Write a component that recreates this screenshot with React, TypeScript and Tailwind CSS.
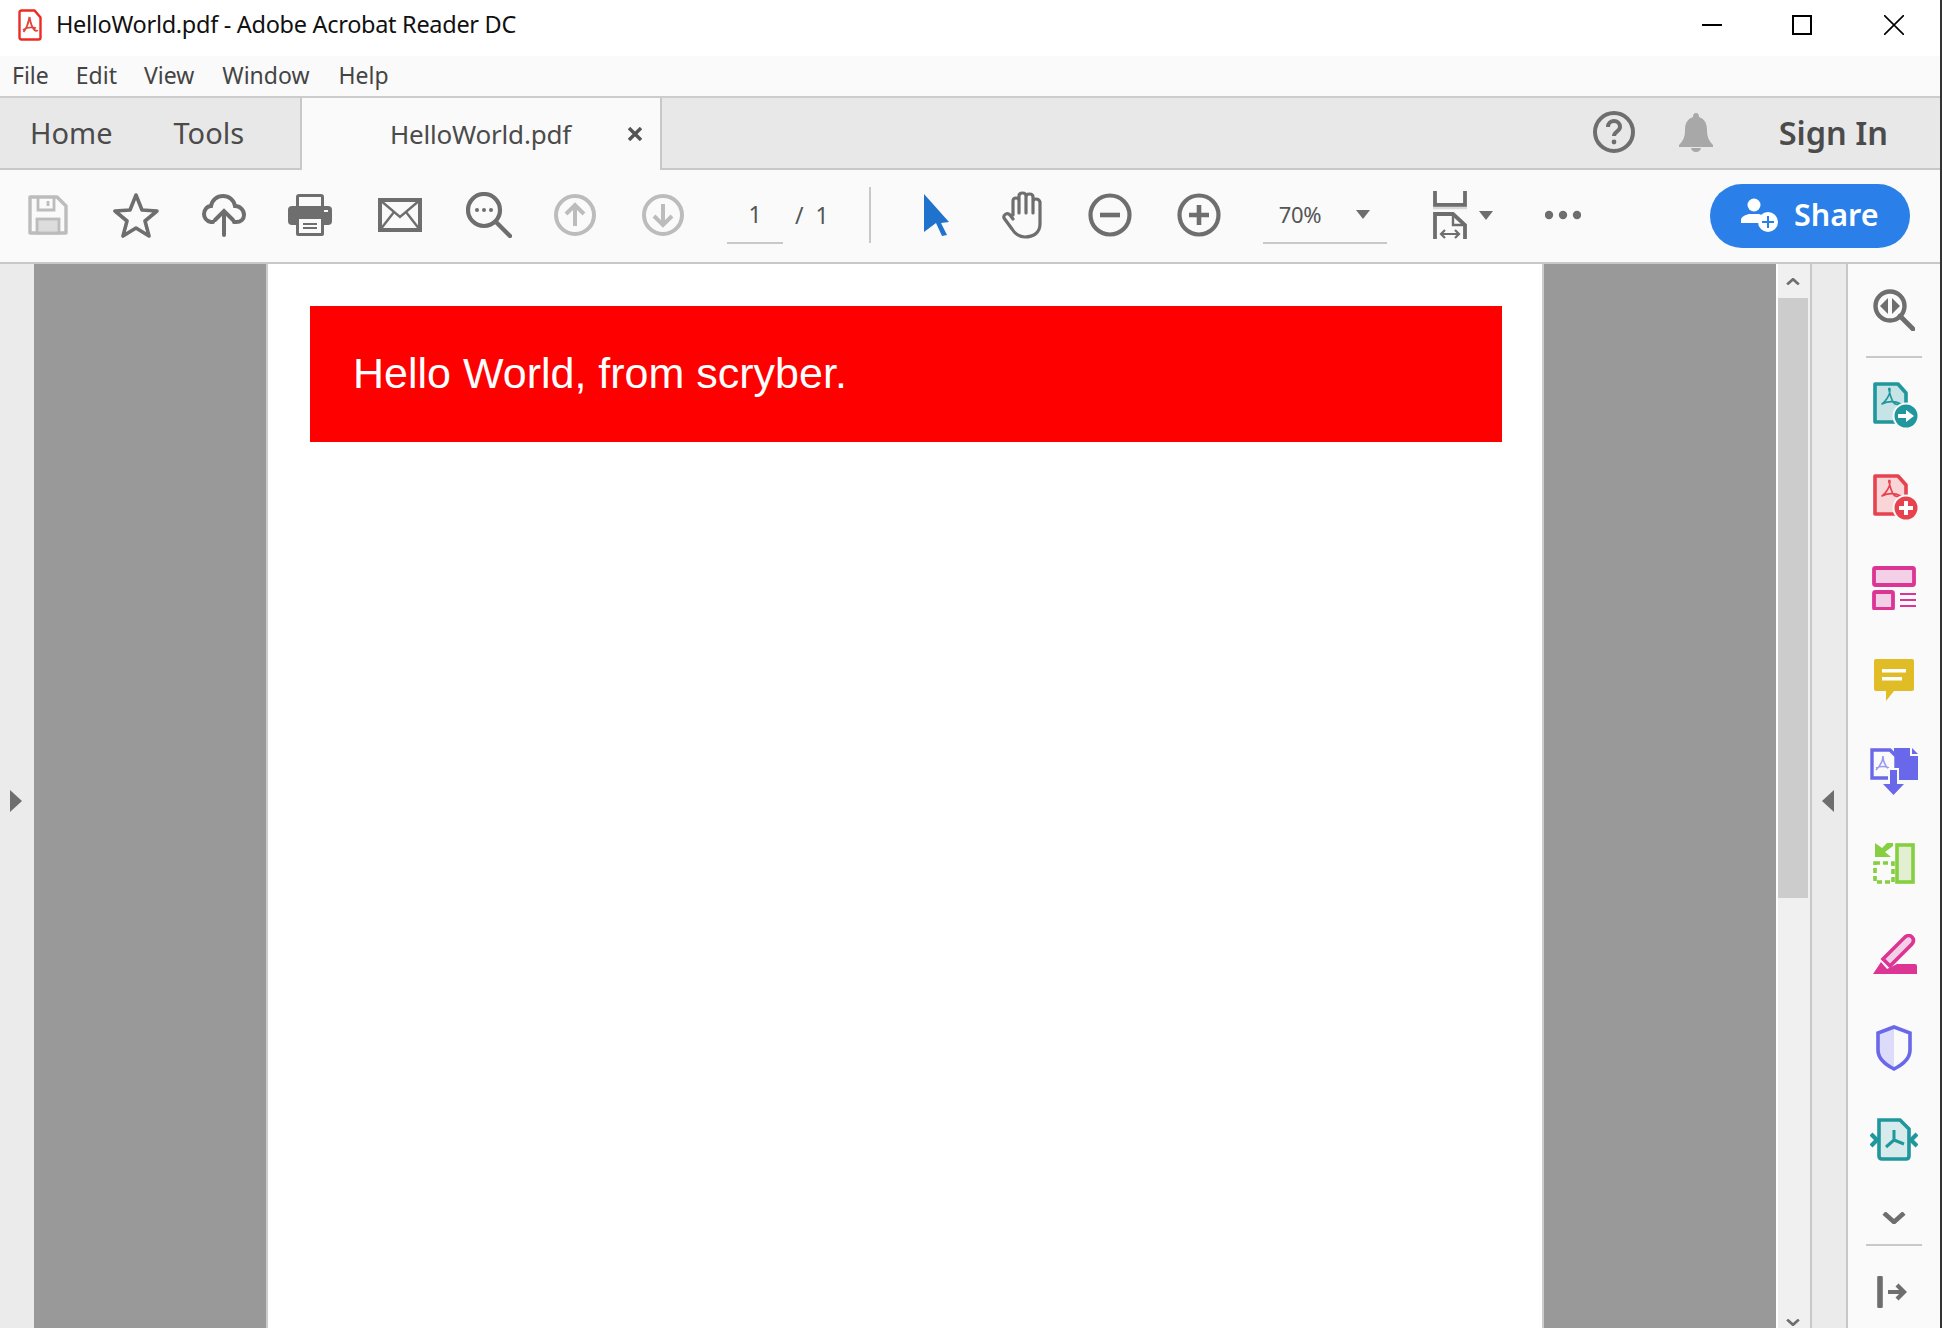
import React from "react";

const gray = "#6e6e6e";
const light = "#bcbcbc";

const Acro = ({ color, sw = 1.6 }: { color: string; sw?: number }) => (
  <path
    d="M16 8c1 5 3 10 4 12 2 3 6 3 8 2M16 8c-1-1 1-3 1 0 0 5-4 11-8 14M9 22c6-3 13-3 19 0"
    fill="none"
    stroke={color}
    strokeWidth={sw}
    strokeLinecap="round"
  />
);

// red pdf glyph next to the window title
const TitlePdf = () => (
  <svg width="26" height="34" viewBox="0 0 26 34" className="ml-[17px] shrink-0" fill="none">
    <path d="M2.5 4.5q0-2 2-2h13l6 7v20q0 2-2 2h-17q-2 0-2-2z" stroke="#ee2a24" strokeWidth="2.4" />
    <path d="M12.5 9c1 6 3 11 5 13 1 1 3 1 3 0M12.5 9c-1 2 0 7-6 15M6 22c4-3 9-3 13-2" stroke="#e2453c" strokeWidth="1.8" />
  </svg>
);

const Save = () => (
  <svg width="40" height="40" viewBox="0 0 40 40" className="ml-[28px]" fill="none" stroke={light} strokeWidth="3.4">
    <path d="M2 2h27l9 9v27H2z" strokeLinejoin="round" />
    <path d="M10 2v13h16V2M20 6v5" strokeWidth="2.8" />
    <rect x="9" y="24" width="22" height="14" fill="#dcdcdc" strokeWidth="2.8" />
  </svg>
);

const Star = () => (
  <svg width="48" height="46" viewBox="0 0 48 46" className="ml-[44px]" fill="none" stroke={gray} strokeWidth="3.6">
    <path d="M24 3l6 15 15 1-12 10 4 15-13-8-13 8 4-15L3 19l15-1z" strokeLinejoin="round" />
  </svg>
);

const Cloud = () => (
  <svg width="44" height="44" viewBox="0 0 44 44" className="ml-[42px]" fill="none" stroke={gray} strokeWidth="4" strokeLinecap="round">
    <path d="M11 29H9C4 28 2 24 2 21c0-4 3-8 7-8C10 7 15 3 21 3s11 4 12 10c5 0 9 4 9 9 0 4-3 7-8 7h-2" />
    <path d="M22 42V19M13 27l9-9 9 9" />
  </svg>
);

const Printer = () => (
  <svg width="44" height="42" viewBox="0 0 44 42" className="ml-[42px]" fill={gray}>
    <path d="M8 14V3q0-3 3-3h22q3 0 3 3v11h-3V3H11v11z" />
    <rect x="0" y="12" width="44" height="19" rx="4" />
    <rect x="8" y="22" width="28" height="20" rx="2" />
    <rect x="11" y="25" width="22" height="14" fill="#fafafa" />
    <path d="M15 29h14v2H15zM15 33h14v2H15z" />
    <rect x="36" y="16" width="4" height="2" fill="#fafafa" />
  </svg>
);

const Mail = () => (
  <svg width="44" height="34" viewBox="0 0 44 34" className="ml-[46px]" fill="none" stroke={gray}>
    <rect x="2" y="2" width="40" height="30" strokeWidth="4" />
    <path d="M2 2l20 17L42 2M2 32l14-18M42 32L28 14" strokeWidth="2.4" />
  </svg>
);

const FindIcon = () => (
  <svg width="46" height="46" viewBox="0 0 46 46" className="ml-[44px]" fill="none" stroke={gray}>
    <circle cx="18" cy="18" r="16" strokeWidth="4.2" />
    <path d="M30 30l14 14" strokeWidth="4.4" strokeLinecap="round" />
    <circle cx="11" cy="18" r="2" fill={gray} stroke="none" />
    <circle cx="18" cy="18" r="2" fill={gray} stroke="none" />
    <circle cx="25" cy="18" r="2" fill={gray} stroke="none" />
  </svg>
);

const PageArrow = ({ down, className }: { down?: boolean; className: string }) => (
  <svg width="42" height="42" viewBox="0 0 42 42" className={className} fill="none" stroke={light} strokeWidth="4">
    <circle cx="21" cy="21" r="19" />
    {down ? <path d="M21 10v21M12 22l9 9 9-9" /> : <path d="M21 32V11M12 20l9-9 9 9" />}
  </svg>
);

const Pointer = () => (
  <svg width="26" height="42" viewBox="0 0 26 42" className="ml-[53px]" fill="#1f73cc">
    <path d="M0 0l25 28-8 1 6 12-5 1-6-13-12 9z" />
  </svg>
);

const Hand = () => (
  <svg width="44" height="48" viewBox="0 0 44 48" className="ml-[52px]" fill="none" stroke={gray} strokeWidth="3.2" strokeLinecap="round" strokeLinejoin="round">
    <path d="M11 24V10q0-3 3-3t3 3v12M17 20V5q0-3 3.5-3T24 5v17M24 20V6q0-3 3.5-3T31 6v16M31 21V11q0-3 3-3t4 3v22c0 9-7 13-15 13-6 0-10-3-13-8L2 27c-1-3 3-6 6-3l3 4" />
  </svg>
);

const Zoom = ({ plus, className }: { plus?: boolean; className: string }) => (
  <svg width="44" height="44" viewBox="0 0 44 44" className={className} fill="none" stroke={gray}>
    <circle cx="22" cy="22" r="19.5" strokeWidth="4.2" />
    <path d={plus ? "M12 22h20M22 12v20" : "M12 22h20"} strokeWidth="4.6" />
  </svg>
);

const Caret = ({ className }: { className: string }) => (
  <svg width="14" height="9" viewBox="0 0 14 9" className={className} fill={gray}>
    <path d="M0 0h14L7 9z" />
  </svg>
);

const FitWidth = () => (
  <svg width="34" height="48" viewBox="0 0 34 48" className="ml-[46px]" fill="none" stroke={gray} strokeWidth="3.8">
    <path d="M2 0v14h30V0" />
    <path d="M0 17h34" stroke="#d9d9d9" strokeWidth="2.4" />
    <path d="M2 48V23h18l12 11v14" />
    <path d="M20 23v11h12" strokeWidth="2.4" />
    <path d="M8 43h18M12 39l-4 4 4 4M22 39l4 4-4 4" strokeWidth="2.2" />
  </svg>
);

const Dots = () => (
  <svg width="36" height="10" viewBox="0 0 36 10" className="ml-[52px]" fill={gray}>
    <circle cx="4" cy="5" r="4.2" />
    <circle cx="18" cy="5" r="4.2" />
    <circle cx="32" cy="5" r="4.2" />
  </svg>
);

const ShareUser = () => (
  <svg width="38" height="36" viewBox="0 0 38 36" className="ml-[31px]" fill="#fff">
    <circle cx="13" cy="8" r="6.5" />
    <path d="M0 26v-3c0-3 4-5 8-6h10c3 1 5 2 6 3-3 1-6 3-7 6z" />
    <circle cx="27" cy="25" r="10" />
    <path d="M26 19h2v5h5v2h-5v5h-2v-5h-5v-2h5z" fill="#2a80e8" />
  </svg>
);

const Help = () => (
  <svg width="42" height="42" viewBox="0 0 42 42" className="mb-[2px]" fill="none" stroke={gray}>
    <circle cx="21" cy="21" r="19" strokeWidth="4" />
    <path d="M15 16c0-4 3-6 6-6s6 2 6 6c0 4-6 5-6 9" strokeWidth="4" />
    <circle cx="21" cy="31" r="2.4" fill={gray} stroke="none" />
  </svg>
);

const Bell = () => (
  <svg width="34" height="40" viewBox="0 0 34 40" className="ml-[44px] mb-[2px]" fill="#a8a8a8">
    <path d="M14 5q0-4 3-4t3 4c6 2 8 7 8 13 0 7 2 11 6 15v2H0v-2c4-4 6-8 6-15 0-6 2-11 8-13z" />
    <path d="M12 36h10q-1 4-5 4t-5-4z" />
  </svg>
);

const PanelFind = () => (
  <svg width="42" height="42" viewBox="0 0 42 42" fill="none" stroke={gray}>
    <circle cx="17" cy="17" r="14.5" strokeWidth="4.4" />
    <path d="M27 27l13 13" strokeWidth="4.8" strokeLinecap="round" />
    <path d="M15 9v16l-8-8zM19 9v16l8-8z" fill={gray} stroke="none" />
  </svg>
);

const PdfBadge = ({ color, tint, plus }: { color: string; tint: string; plus?: boolean }) => (
  <svg width="46" height="48" viewBox="0 0 46 48" className="ml-[4px] mt-[4px]" fill="none">
    <path d="M2 2h23l8 9v29H2z" fill={tint} stroke={color} strokeWidth="3.6" strokeLinejoin="round" />
    <Acro color={color} />
    <circle cx="33" cy="34" r="13.5" fill="#fafafa" />
    <circle cx="33" cy="34" r="11.5" fill={color} />
    {plus ? (
      <path d="M31 27h4v5h5v4h-5v5h-4v-5h-5v-4h5z" fill="#fff" />
    ) : (
      <path d="M25 32h8v-4l8 6-8 6v-4h-8z" fill="#fff" />
    )}
  </svg>
);

const Organize = () => (
  <svg width="44" height="44" viewBox="0 0 44 44" fill="#f3d0e6" stroke="#dc3593" strokeWidth="3.8">
    <rect x="2" y="2" width="40" height="17" rx="1.5" />
    <rect x="2" y="26" width="19" height="17" rx="1.5" />
    <path d="M28 28h16M28 34h16M28 40h16" strokeWidth="2" fill="none" />
  </svg>
);

const Comment = () => (
  <svg width="40" height="42" viewBox="0 0 40 42">
    <path d="M2 0h36q2 0 2 2v28q0 2-2 2H20l-8 10V32H2q-2 0-2-2V2q0-2 2-2z" fill="#e0bc27" />
    <path d="M8 10h24v3.6H8zM8 18h20v3.6H8z" fill="#fff" />
  </svg>
);

const Convert = () => (
  <svg width="48" height="48" viewBox="0 0 48 48">
    <path d="M24 0h16v8h8v24H24z" fill="#6a68ea" />
    <path d="M42 0l6 6h-6z" fill="#6a68ea" />
    <path d="M2 2h18l6 6v22H2z" fill="#fafafa" stroke="#6a68ea" strokeWidth="3.4" />
    <path d="M13 8c0 5 2 10 6 13M13 8c0 5-3 10-7 14M6 20c5-2 9-2 13 0" fill="none" stroke="#9a99f0" strokeWidth="1.6" />
    <path d="M18 20h11v14h8l-13.500 14L10 34h8z" fill="#fafafa" />
    <path d="M20 22h7v14h7L23.500 47 13 36h7z" fill="#6a68ea" />
  </svg>
);

const Compress = () => (
  <svg width="42" height="42" viewBox="0 0 42 42" fill="none">
    <rect x="24" y="2" width="16" height="37" fill="#e2efd3" stroke="#85cf41" strokeWidth="3.6" />
    <path d="M2 0v14h16l-6-5 8-6V0h-6l-5 5z" fill="#85cf41" />
    <rect x="2" y="20" width="18" height="19" stroke="#85cf41" strokeWidth="3.6" strokeDasharray="5 3" />
  </svg>
);

const SignPen = () => (
  <svg width="46" height="40" viewBox="0 0 46 40" className="mt-[-4px]">
    <path d="M12 25L34 3q4-3 7 0t0 7L19 32z" fill="#f3d0e6" stroke="#dc3593" strokeWidth="3.6" />
    <path d="M2 40l8-12 6 7 10-5h18q2 0 2 2v8z" fill="#dc3593" />
  </svg>
);

const Shield = () => (
  <svg width="38" height="46" viewBox="0 0 38 46" fill="none">
    <path d="M19 2L3 8v17c0 9 8 15 16 19z" fill="#dcdcfa" />
    <path d="M19 2l16 6v17c0 9-8 15-16 19C11 40 3 34 3 25V8z" stroke="#6a68ea" strokeWidth="3.6" />
  </svg>
);

const Optimize = () => (
  <svg width="48" height="44" viewBox="0 0 48 44" fill="none" stroke="#1f979c">
    <path d="M8 3h21l9 9v27q0 3-3 3H11q-3 0-3-3z" fill="#d7ebec" strokeWidth="3.6" transform="translate(1 -1)" />
    <path d="M24 12v10M24 22l-8 7M24 22l10 4" strokeWidth="3" />
    <path d="M1 16l6 6-6 6M47 16l-6 6 6 6" strokeWidth="4.2" />
  </svg>
);

const Chevron = ({ up, size = 24, className }: { up?: boolean; size?: number; className?: string }) => (
  <svg width={size} height={size / 2} viewBox="0 0 24 12" className={className} fill="none" stroke={gray} strokeWidth="4.6">
    <path d={up ? "M2 11L12 2l10 9" : "M2 1l10 9 10-9"} />
  </svg>
);

const Collapse = () => (
  <svg width="30" height="32" viewBox="0 0 30 32" className="ml-[-4px]" fill="none" stroke={gray}>
    <path d="M3 2v28" strokeWidth="5.600" strokeLinecap="round" />
    <path d="M11 16h16M20 9l7 7-7 7" strokeWidth="4.2" />
  </svg>
);

const PanelItem = ({ children }: { children: React.ReactNode }) => (
  <div className="h-[92px] shrink-0 flex items-center justify-center">{children}</div>
);

export default function App() {
  return (
    <div className="w-[1942px] h-[1328px] flex overflow-hidden bg-white [font-family:'Open_Sans',sans-serif]">
      <div className="w-[1940px] flex flex-col">
        {/* Title bar */}
        <div className="h-[56px] shrink-0 flex items-center bg-white pb-[6px]">
          <TitlePdf />
          <span className="ml-[13px] text-[23.5px] text-[#111] tracking-[-0.3px] [font-family:'Noto_Sans',sans-serif]">
            HelloWorld.pdf - Adobe Acrobat Reader DC
          </span>
          <div className="ml-auto flex items-center">
            <div className="w-[20px] h-[2px] bg-black" />
            <div className="ml-[70px] w-[20px] h-[20px] border-2 border-black" />
            <svg width="20" height="20" viewBox="0 0 20 20" className="ml-[72px] mr-[36px]" stroke="#000" strokeWidth="1.6">
              <path d="M0 0l20 20M20 0L0 20" />
            </svg>
          </div>
        </div>

        {/* Menu bar */}
        <div className="h-[42px] shrink-0 flex items-center bg-[#fafafa] border-b-2 border-[#cccccc] pl-[12px] pb-[2px] text-[23px] text-[#444] [font-family:'Noto_Sans',sans-serif]">
          <span>File</span>
          <span className="ml-[27px]">Edit</span>
          <span className="ml-[27px]">View</span>
          <span className="ml-[28px]">Window</span>
          <span className="ml-[29px]">Help</span>
        </div>

        {/* Tabs */}
        <div className="h-[72px] shrink-0 flex bg-[#e8e8e8] border-b-2 border-[#c8c8c8] [font-family:'Noto_Sans',sans-serif] text-[#4b4b4b]">
          <div className="w-[300px] flex items-center pl-[30px] text-[29px]">
            <span>Home</span>
            <span className="ml-[61px]">Tools</span>
          </div>
          <div className="w-[362px] h-[72px] flex items-center bg-[#fafafa] border-x-2 border-[#c8c8c8] pl-[88px] text-[26px]">
            <span className="tracking-[-0.2px]">HelloWorld.pdf</span>
            <svg width="14" height="14" viewBox="0 0 14 14" className="ml-[57px]" stroke="#555" strokeWidth="3.4">
              <path d="M1 1l12 12M13 1L1 13" />
            </svg>
          </div>
          <div className="ml-auto flex items-center pr-[52px]">
            <Help />
            <Bell />
            <span className="ml-[66px] text-[32.5px] font-semibold text-[#4b4b4b]">Sign In</span>
          </div>
        </div>

        {/* Toolbar */}
        <div className="h-[94px] shrink-0 flex items-center bg-[#fafafa] border-b-2 border-[#c8c8c8] pb-[2px] text-[#555] [font-family:'Noto_Sans',sans-serif]">
          <Save />
          <Star />
          <Cloud />
          <Printer />
          <Mail />
          <FindIcon />
          <PageArrow className="ml-[42px]" />
          <PageArrow down className="ml-[46px]" />
          <div className="ml-[43px] w-[56px] h-[56px] flex items-center justify-center border-b-2 border-[#c8c8c8] text-[23px] mt-[1px]">1</div>
          <span className="ml-[12px] text-[23px]">/</span>
          <span className="ml-[12px] text-[23px]">1</span>
          <div className="ml-[40px] w-[2px] h-[56px] bg-[#c8c8c8]" />
          <Pointer />
          <Hand />
          <Zoom className="ml-[42px]" />
          <Zoom plus className="ml-[45px]" />
          <div className="ml-[42px] w-[124px] h-[56px] flex items-center border-b-2 border-[#c8c8c8] pl-[16px] mt-[1px]">
            <span className="text-[22px] tracking-[-0.3px]">70%</span>
            <Caret className="ml-[35px]" />
          </div>
          <FitWidth />
          <Caret className="ml-[12px]" />
          <Dots />
          <button className="ml-auto mr-[30px] mt-[2px] w-[200px] h-[64px] rounded-[32px] bg-[#2a80e8] flex items-center pb-[2px] text-white text-[30.5px] font-semibold">
            <ShareUser />
            <span className="ml-[15px]">Share</span>
          </button>
        </div>

        {/* Body */}
        <div className="flex-1 min-h-0 flex">
          <div className="w-[34px] shrink-0 bg-[#ebebeb] flex items-center justify-center pt-[10px]">
            <svg width="12" height="22" viewBox="0 0 12 22" fill={gray} className="mr-[2px]">
              <path d="M0 0l12 11L0 22z" />
            </svg>
          </div>

          <div className="flex-1 bg-[#999999] pl-[232px] overflow-hidden">
            <div className="w-[1278px] h-full bg-white border-x-2 border-[#cccccc] pt-[42px] pl-[42px]">
              <div className="w-[1192px] h-[136px] bg-[#ff0000] flex items-center pl-[43px] pb-[2px] text-white text-[43px] [font-family:'Liberation_Sans',sans-serif]">
                Hello World, from scryber.
              </div>
            </div>
          </div>

          {/* Scroll bar */}
          <div className="w-[36px] shrink-0 flex flex-col bg-[#f0f0f0] border-l-2 border-r-2 border-l-white border-r-[#c8c8c8]">
            <div className="h-[34px] flex items-center justify-center pr-[2px]">
              <Chevron up size={14} />
            </div>
            <div className="h-[600px] w-[30px] bg-[#cccccc]" />
            <div className="flex-1 flex items-end justify-center pb-[2px] pr-[2px]">
              <Chevron size={14} />
            </div>
          </div>

          <div className="w-[36px] shrink-0 bg-[#ebebeb] border-r-2 border-[#c8c8c8] flex items-center justify-center pt-[10px]">
            <svg width="12" height="22" viewBox="0 0 12 22" fill={gray} className="mr-[2px]">
              <path d="M12 0L0 11l12 11z" />
            </svg>
          </div>

          {/* Tools panel */}
          <div className="w-[92px] shrink-0 flex flex-col bg-[#fafafa] overflow-hidden">
            <PanelItem><PanelFind /></PanelItem>
            <div className="h-[2px] shrink-0 mx-[18px] bg-[#c8c8c8]" />
            <PanelItem><PdfBadge color="#1f979c" tint="#c6e3e5" /></PanelItem>
            <PanelItem><PdfBadge color="#e6434f" tint="#f9d5d8" plus /></PanelItem>
            <PanelItem><Organize /></PanelItem>
            <PanelItem><Comment /></PanelItem>
            <PanelItem><Convert /></PanelItem>
            <PanelItem><Compress /></PanelItem>
            <PanelItem><SignPen /></PanelItem>
            <PanelItem><Shield /></PanelItem>
            <PanelItem><Optimize /></PanelItem>
            <div className="h-[58px] shrink-0 flex items-center justify-center pt-[6px]">
              <Chevron />
            </div>
            <div className="h-[2px] shrink-0 mx-[18px] bg-[#c8c8c8]" />
            <PanelItem><Collapse /></PanelItem>
          </div>
        </div>
      </div>
      <div className="w-[2px] bg-[#333333]" />
    </div>
  );
}
